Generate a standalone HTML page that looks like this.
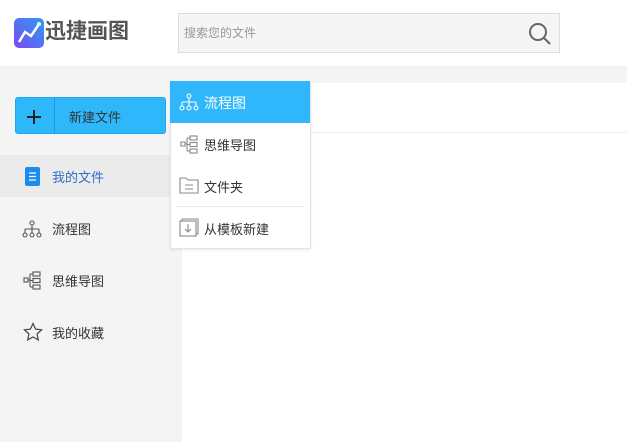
<!DOCTYPE html>
<html><head><meta charset="utf-8"><style>
*{margin:0;padding:0;box-sizing:border-box}
body{width:627px;height:442px;overflow:hidden;background:#f4f4f4;font-family:"Liberation Sans","Noto Sans CJK SC",sans-serif;position:relative;font-size:13px;color:#333}
.a{position:absolute}
</style></head><body>
<div class="a" style="left:0;top:0;width:627px;height:66px;background:#fff"></div>
<svg class="a" style="left:14px;top:18px" width="30" height="30" viewBox="0 0 30 30"><defs><linearGradient id="g" x1="0" y1="1" x2="1" y2="0"><stop offset="0" stop-color="#7b4cf0"/><stop offset="1" stop-color="#2a9cf6"/></linearGradient></defs><rect width="30" height="30" rx="5" fill="url(#g)"/><polyline points="5,24 11,14 17,18 25,6" fill="none" stroke="#fff" stroke-width="2.5"/><circle cx="25" cy="6" r="2" fill="#fff"/></svg>
<div class="a" style="left:45px;top:18px;font-size:21px;font-weight:bold;color:#555;line-height:28px">迅捷画图</div>
<div class="a" style="left:178px;top:13px;width:382px;height:40px;background:#f5f5f5;border:1px solid #ddd"></div>
<div class="a" style="left:184px;top:24px;font-size:12px;color:#999">搜索您的文件</div>
<svg class="a" style="left:528px;top:22px" width="24" height="24" viewBox="0 0 24 24"><circle cx="10" cy="10" r="8" fill="none" stroke="#666" stroke-width="2"/><line x1="16" y1="16" x2="22" y2="22" stroke="#666" stroke-width="2"/></svg>
<div class="a" style="left:182px;top:83px;width:445px;height:359px;background:#fff"></div>
<div class="a" style="left:182px;top:132px;width:445px;height:1px;background:#eee"></div>
<div class="a" style="left:15px;top:97px;width:151px;height:37px;background:#2eb8fb;border-radius:3px;border:1px solid #22a6e8"></div>
<div class="a" style="left:54px;top:98px;width:1px;height:35px;background:#1c9ad8"></div>
<svg class="a" style="left:27px;top:110px" width="14" height="14"><path d="M7 0v14M0 7h14" stroke="#222" stroke-width="2"/></svg>
<div class="a" style="left:69px;top:107px;color:#333">新建文件</div>
<div class="a" style="left:0;top:155px;width:182px;height:42px;background:#ebebeb"></div>
<svg class="a" style="left:25px;top:167px" width="15" height="19"><rect width="15" height="19" rx="2" fill="#1a8cf0"/><path d="M4 6h7M4 9.5h7M4 13h7" stroke="#fff" stroke-width="1.3"/></svg>
<div class="a" style="left:52px;top:167px;color:#2a6fc9">我的文件</div>
<svg class="a" style="left:22px;top:220px" width="20" height="18" fill="none" stroke="#555" stroke-width="1.1"><circle cx="10" cy="3" r="2"/><path d="M10 5v4M3 9h14M3 9v4M10 9v4M17 9v4"/><circle cx="3" cy="15" r="2"/><circle cx="10" cy="15" r="2"/><circle cx="17" cy="15" r="2"/></svg>
<div class="a" style="left:52px;top:219px">流程图</div>
<svg class="a" style="left:23px;top:271px" width="18" height="19" fill="none" stroke="#555" stroke-width="1.1"><rect x="1" y="7" width="4" height="4"/><rect x="10" y="1" width="7" height="4"/><rect x="10" y="7.5" width="7" height="4"/><rect x="10" y="14" width="7" height="4"/><path d="M5 9h2M7 3v13M7 3h3M7 9.5h3M7 16h3"/></svg>
<div class="a" style="left:52px;top:271px">思维导图</div>
<svg class="a" style="left:23px;top:322px" width="20" height="20"><path d="M10 1.5l2.6 5.6 6 .7-4.5 4.1 1.2 6-5.3-3-5.3 3 1.2-6L1.4 7.8l6-.7z" fill="none" stroke="#444" stroke-width="1.2"/></svg>
<div class="a" style="left:52px;top:323px">我的收藏</div>
<div class="a" style="left:170px;top:81px;width:141px;height:168px;background:#fff;border:1px solid #e3e3e3;box-shadow:0 1px 3px rgba(0,0,0,.08)"></div>
<div class="a" style="left:170px;top:81px;width:140px;height:42px;background:#30b6fb"></div>
<svg class="a" style="left:179px;top:93px" width="20" height="18" fill="none" stroke="#fff" stroke-width="1.1"><circle cx="10" cy="3" r="2"/><path d="M10 5v4M3 9h14M3 9v4M10 9v4M17 9v4"/><circle cx="3" cy="15" r="2"/><circle cx="10" cy="15" r="2"/><circle cx="17" cy="15" r="2"/></svg>
<div class="a" style="left:204px;top:93px;color:#fff;font-size:14px">流程图</div>
<svg class="a" style="left:180px;top:135px" width="18" height="19" fill="none" stroke="#888" stroke-width="1.1"><rect x="1" y="7" width="4" height="4"/><rect x="10" y="1" width="7" height="4"/><rect x="10" y="7.5" width="7" height="4"/><rect x="10" y="14" width="7" height="4"/><path d="M5 9h2M7 3v13M7 3h3M7 9.5h3M7 16h3"/></svg>
<div class="a" style="left:204px;top:135px">思维导图</div>
<svg class="a" style="left:179px;top:177px" width="20" height="17" fill="none" stroke="#888" stroke-width="1.1"><path d="M1 1h6l2 2h10v13H1z"/><path d="M6 8h8M6 12h8"/></svg>
<div class="a" style="left:204px;top:177px">文件夹</div>
<div class="a" style="left:176px;top:206px;width:129px;height:1px;background:#e8e8e8"></div>
<svg class="a" style="left:179px;top:218px" width="20" height="19" fill="none" stroke="#888" stroke-width="1.1"><path d="M3 3V1h16v15h-2"/><rect x="1" y="3" width="16" height="15"/><path d="M9 6v8M6 11l3 3 3-3"/></svg>
<div class="a" style="left:204px;top:219px">从模板新建</div>
</body></html>
